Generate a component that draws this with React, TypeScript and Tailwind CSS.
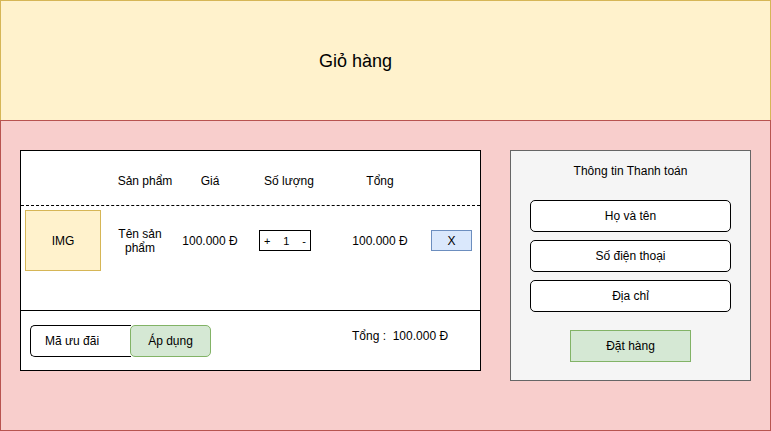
export default function App() {
  return (
    <div className="w-[771px] h-[431px] flex flex-col text-black text-[12px] leading-[14px] font-['Liberation_Sans',Arial,sans-serif]">
      {/* Header */}
      <div className="h-[120px] shrink-0 border-t border-x border-[#d6b656] bg-[#fff2cc] flex items-center pl-[318px]">
        <span className="text-[18px] leading-[20px]">Giỏ hàng</span>
      </div>

      {/* Body */}
      <div className="h-[311px] shrink-0 border border-[#b85450] bg-[#f8cecc] flex items-start gap-[29px] pt-[29px] pl-[19px]">
        {/* Cart table */}
        <div className="w-[461px] h-[221px] border border-black bg-white flex flex-col">
          <div className="h-[54px] grid grid-cols-[84px_70px_70px_88px_94px_48px] items-start pt-[23px]">
            <div />
            <div className="text-center pl-[10px] whitespace-nowrap">Sản phẩm</div>
            <div className="text-center">Giá</div>
            <div className="text-center">Số lượng</div>
            <div className="text-center">Tổng</div>
            <div />
          </div>
          <div className="h-[105px] border-t border-dashed border-black grid grid-cols-[84px_70px_70px_88px_94px_48px] items-start">
            <div className="pt-[4px] pl-[4px]">
              <div className="w-[76px] h-[61px] border border-[#d6b656] bg-[#fff2cc] flex items-center justify-center">
                IMG
              </div>
            </div>
            <div className="pt-[21px] text-center leading-[14px]">
              Tên sản
              <br />
              phẩm
            </div>
            <div className="pt-[28px] text-center">100.000 Đ</div>
            <div className="pt-[24px] pl-[14px]">
              <div className="w-[52px] h-[21px] border border-black flex items-center justify-between px-[4px] text-[11px]">
                <span>+</span>
                <span>1</span>
                <span>-</span>
              </div>
            </div>
            <div className="pt-[28px] text-center">100.000 Đ</div>
            <div className="pt-[24px] pl-[4px]">
              <div className="w-[41px] h-[21px] border border-[#6c8ebf] bg-[#dae8fc] flex items-center justify-center">
                X
              </div>
            </div>
          </div>
          <div className="flex-1 border-t border-black flex items-start pt-[14px] pl-[9px]">
            <div className="w-[101px] h-[32px] border-y border-l border-black rounded-l-[5px] flex items-center pl-[14px]">
              Mã ưu đãi
            </div>
            <div className="w-[81px] h-[32px] -ml-[1px] border border-[#82b366] bg-[#d5e8d4] rounded-[5px] flex items-center justify-center">
              Áp dụng
            </div>
            <div className="ml-[141px] mt-[4px] whitespace-pre">Tổng :  100.000 Đ</div>
          </div>
        </div>

        {/* Payment panel */}
        <div className="w-[241px] h-[231px] border border-[#666666] bg-[#f5f5f5] flex flex-col items-center pt-[13px]">
          <div className="text-center">Thông tin Thanh toán</div>
          <div className="mt-[22px] flex flex-col gap-[8px]">
            <div className="w-[201px] h-[32px] border border-black bg-white rounded-[5px] flex items-center justify-center">
              Họ và tên
            </div>
            <div className="w-[201px] h-[32px] border border-black bg-white rounded-[5px] flex items-center justify-center">
              Số điện thoại
            </div>
            <div className="w-[201px] h-[32px] border border-black bg-white rounded-[5px] flex items-center justify-center">
              Địa chỉ
            </div>
          </div>
          <div className="mt-[18px] w-[121px] h-[32px] border border-[#82b366] bg-[#d5e8d4] flex items-center justify-center">
            Đặt hàng
          </div>
        </div>
      </div>
    </div>
  );
}
